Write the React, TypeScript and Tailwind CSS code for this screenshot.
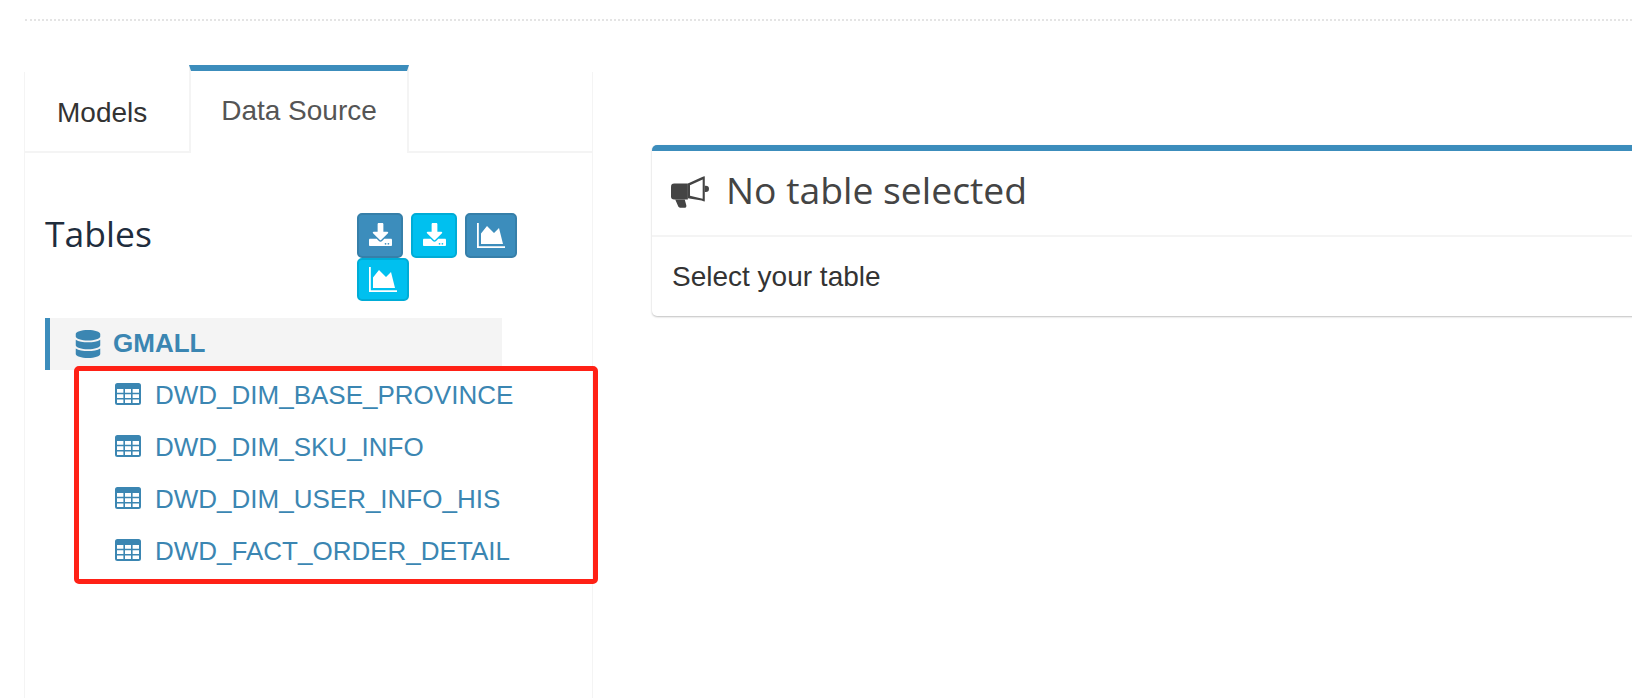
import { FaDatabase, FaDownload } from "react-icons/fa";

const tables = ["DWD_DIM_BASE_PROVINCE", "DWD_DIM_SKU_INFO", "DWD_DIM_USER_INFO_HIS", "DWD_FACT_ORDER_DETAIL"];

function Bullhorn({ className }: { className?: string }) {
  return (
    <svg viewBox="0 0 36 30" className={className} fill="#444">
      <path d="M3 7h13v15H3a3 3 0 0 1-3-3v-9a3 3 0 0 1 3-3z" />
      <path d="M4 22h9l1.500 5.500c.4 1.400-.5 2.500-2 2.500H9.500C8 30 7 29.300 6.600 28z" />
      <path
        fillRule="evenodd"
        d="M16 7 29 1q2-1 3-1v24q-1 0-3-1l-13-2zm2 1.700v9.800l12 3V3.200z"
      />
      <path d="M32 9h1a3 3 0 0 1 0 6h-1z" />
    </svg>
  );
}

function TableIcon() {
  return (
    <svg viewBox="0 0 26 22" className="mb-[2px] mr-[14px] h-[22px] w-[26px] shrink-0" fill="currentColor">
      <path
        fillRule="evenodd"
        d="M2.500 0h21A2.500 2.500 0 0 1 26 2.500v17a2.500 2.500 0 0 1-2.500 2.500h-21A2.500 2.500 0 0 1 0 19.500v-17A2.500 2.500 0 0 1 2.500 0zM2 6v3.700h6.400V6zm8 0v3.700h6V6zm7.600 0v3.700H24V6zM2 11.300V15h6.400v-3.700zm8 0V15h6v-3.700zm7.600 0V15H24v-3.700zM2 16.600V20h6.400v-3.400zm8 0V20h6v-3.400zm7.600 0V20H24v-3.400z"
      />
    </svg>
  );
}

function AreaIcon() {
  return (
    <svg viewBox="0 0 28 26" className="h-[26px] w-[28px]" fill="currentColor">
      <path d="M0 0h1.800v23.200H28V25H0z" />
      <path d="M4 21V10.500L10 3l7 7 5-5 4 16z" />
    </svg>
  );
}

export default function App() {
  const btn = "flex items-center justify-center rounded-[5px] border-2 text-white";
  const blue = "bg-[#3c8dbc] border-[#367fa9]";
  const cyan = "bg-[#00c0ef] border-[#00acd6]";
  return (
    <div className="relative h-[698px] overflow-hidden bg-white font-['Liberation_Sans',sans-serif]">
      <div className="ml-[25px] h-[21px] border-b-2 border-dotted border-[#e4e4e4]" />
      <div className="ml-[24px] mt-[44px] flex items-start">
        <div className="flex h-[633px] w-[569px] shrink-0 flex-col">
          <div className="flex h-[88px] items-end">
            <div className="flex h-[81px] w-[165px] items-center border-b-2 border-l border-[#f4f4f4] pl-[32px] text-[28px] text-[#333]">
              <span className="mt-[3px]">Models</span>
            </div>
            <div className="flex h-[88px] w-[220px] items-center justify-center border-x-2 border-t-[6px] border-x-[#f4f4f4] border-t-[#3c8dbc] text-[28px] text-[#555]">
              <span className="mb-[3px]">Data Source</span>
            </div>
            <div className="h-[81px] flex-1 border-b-2 border-r border-[#f4f4f4]" />
          </div>
          <div className="flex-1 border-x border-[#f4f4f4] pl-[20px]">
            <div className="mt-[60px] flex h-[105px] items-start">
              <h2 className="-mt-[2px] w-[312px] font-['Open_Sans',sans-serif] text-[35.500px] leading-[44px] text-[#1f2d3d]">Tables</h2>
              <div className="flex w-[170px] flex-wrap content-start gap-x-[8px]">
                <div className={`${btn} ${blue} h-[45px] w-[46px]`}><FaDownload className="mb-[3px] text-[23px]" /></div>
                <div className={`${btn} ${cyan} h-[45px] w-[46px]`}><FaDownload className="mb-[3px] text-[23px]" /></div>
                <div className={`${btn} ${blue} h-[45px] w-[52px]`}><AreaIcon /></div>
                <div className={`${btn} ${cyan} h-[43px] w-[52px]`}><AreaIcon /></div>
              </div>
            </div>
            <div className="flex h-[52px] w-[457px] items-center border-l-[5px] border-[#3c8dbc] bg-[#f4f4f4] pb-[1px] pl-[24px] text-[26px] font-bold text-[#3b86b2]">
              <FaDatabase className="mr-[11px] text-[28px]" />
              <span>GMALL</span>
            </div>
            <ul className="-mt-[1px] pl-[70px] text-[26px] text-[#3b86b2]">
              {tables.map((t) => (
                <li key={t} className="flex h-[52px] items-center">
                  <TableIcon />
                  <span>{t}</span>
                </li>
              ))}
            </ul>
          </div>
        </div>
        <div className="ml-[59px] mt-[80px] h-[171px] w-[1100px] shrink-0 rounded-[5px] border-t-[6px] border-[#3c8dbc] bg-white shadow-[0_1px_2px_rgba(0,0,0,0.25)]">
          <div className="flex h-[86px] items-center border-b-2 border-[#f4f4f4] pl-[19px]">
            <Bullhorn className="mr-[17px] mb-[2px] h-[32px] w-[38px]" />
            <h3 className="mb-[6px] font-['Open_Sans',sans-serif] text-[37.300px] text-[#444]">No table selected</h3>
          </div>
          <div className="flex h-[79px] items-center pl-[20px] text-[28px] text-[#333]">Select your table</div>
        </div>
      </div>
      <div className="absolute left-[74px] top-[366px] h-[218px] w-[524px] rounded-[5px] border-[5px] border-[#ff2116]" />
    </div>
  );
}
